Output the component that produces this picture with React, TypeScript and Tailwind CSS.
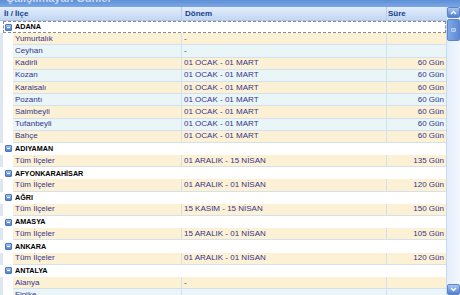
import React from "react";

type Row =
  | { kind: "group"; name: string; focus?: boolean }
  | { kind: "child"; name: string; period: string; days: string };

const rows: Row[] = [
  { kind: "group", name: "ADANA", focus: true },
  { kind: "child", name: "Yumurtalık", period: "-", days: "" },
  { kind: "child", name: "Ceyhan", period: "-", days: "" },
  { kind: "child", name: "Kadirli", period: "01 OCAK - 01 MART", days: "60 Gün" },
  { kind: "child", name: "Kozan", period: "01 OCAK - 01 MART", days: "60 Gün" },
  { kind: "child", name: "Karaisalı", period: "01 OCAK - 01 MART", days: "60 Gün" },
  { kind: "child", name: "Pozantı", period: "01 OCAK - 01 MART", days: "60 Gün" },
  { kind: "child", name: "Saimbeyli", period: "01 OCAK - 01 MART", days: "60 Gün" },
  { kind: "child", name: "Tufanbeyli", period: "01 OCAK - 01 MART", days: "60 Gün" },
  { kind: "child", name: "Bahçe", period: "01 OCAK - 01 MART", days: "60 Gün" },
  { kind: "group", name: "ADIYAMAN" },
  { kind: "child", name: "Tüm İlçeler", period: "01 ARALIK - 15 NİSAN", days: "135 Gün" },
  { kind: "group", name: "AFYONKARAHİSAR" },
  { kind: "child", name: "Tüm İlçeler", period: "01 ARALIK - 01 NİSAN", days: "120 Gün" },
  { kind: "group", name: "AĞRI" },
  { kind: "child", name: "Tüm İlçeler", period: "15 KASIM - 15 NİSAN", days: "150 Gün" },
  { kind: "group", name: "AMASYA" },
  { kind: "child", name: "Tüm İlçeler", period: "15 ARALIK - 01 NİSAN", days: "105 Gün" },
  { kind: "group", name: "ANKARA" },
  { kind: "child", name: "Tüm İlçeler", period: "01 ARALIK - 01 NİSAN", days: "120 Gün" },
  { kind: "group", name: "ANTALYA" },
  { kind: "child", name: "Alanya", period: "-", days: "" },
  { kind: "child", name: "Finike", period: "", days: "" },
];

function Minus() {
  return (
    <div className="ml-[1px] mr-[3px] flex h-[7px] w-[7px] shrink-0 items-center justify-center rounded-[1px] border border-[#4b76b8] bg-gradient-to-b from-[#a3c4f0] to-[#4f82cf]">
      <div className="h-[1px] w-[3px] bg-white" />
    </div>
  );
}

export default function App() {
  let alt = 0;
  return (
    <div
      className="flex h-[295px] w-[460px] flex-col overflow-hidden bg-white"
      style={{ fontFamily: '"Liberation Sans", Arial, sans-serif' }}
    >
      <div className="h-[7px] overflow-hidden bg-gradient-to-b from-[#5d8fd8] to-[#7ba7e2]">
        <div className="mt-[-8px] pl-[6px] text-[11px] font-bold leading-[12px] text-[#c9dcf6]">
          Çalışılmayan Günler
        </div>
      </div>
      <div className="flex min-h-0 flex-1">
        <div className="flex min-w-0 flex-1 flex-col">
          <div className="flex h-[14px] shrink-0 items-center border-b border-[#a9c4e8] bg-gradient-to-b from-[#e3edfb] to-[#c2d7f3] text-[8px] font-bold text-[#15428b]">
            <div className="w-[182px] shrink-0 border-r border-[#b6cdee] pl-[4px] leading-[13px]">İl / İlçe</div>
            <div className="w-[205px] shrink-0 border-r border-[#b6cdee] pl-[3px] leading-[13px]">Dönem</div>
            <div className="flex-1 pl-[1px] leading-[13px]">Süre</div>
          </div>
          <div className="flex flex-col">
            {rows.map((r, i) => {
              if (r.kind === "group") {
                alt = 0;
                return (
                  <div key={i} className="flex h-[12.2px] shrink-0 items-center bg-white">
                    <div
                      className={
                        r.focus
                          ? "ml-[3px] flex h-full flex-1 items-center border border-dashed border-[#8a8a8a]"
                          : "ml-[3px] flex h-full flex-1 items-center border border-transparent"
                      }
                    >
                      <Minus />
                      <span className="text-[7.2px] font-bold leading-none text-black">{r.name}</span>
                    </div>
                  </div>
                );
              }
              const bg = alt % 2 === 0 ? "bg-[#fdf1d5]" : "bg-[#eaf5f7]";
              alt++;
              return (
                <div key={i} className="flex h-[12.2px] shrink-0">
                  <div className="w-[13px] shrink-0 border-l-[3px] border-[#dde6f1] bg-white" />
                  <div
                    className={`flex flex-1 items-center border-b border-[#d3e1ee] text-[8px] leading-none text-[#34348c] ${bg}`}
                  >
                    <div className="flex w-[169px] shrink-0 items-center self-stretch border-r border-[#d3e1ee] pl-[2px]">
                      {r.name}
                    </div>
                    <div className="flex w-[205px] shrink-0 items-center self-stretch border-r border-[#d3e1ee] pl-[2px]">
                      {r.period}
                    </div>
                    <div className="flex flex-1 items-center justify-end self-stretch pr-[2px]">{r.days}</div>
                  </div>
                </div>
              );
            })}
          </div>
        </div>
        <div className="flex w-[14px] shrink-0 flex-col border-l border-[#c9d9f0] bg-gradient-to-r from-[#e3edfb] to-[#f3f7fd]">
          <div className="flex h-[11px] items-center justify-center rounded-[2px] border border-[#5e86c6] bg-gradient-to-b from-[#a8c6f1] to-[#4f7fcd]">
            <svg width="7" height="5" viewBox="0 0 7 5">
              <path d="M1 4 L3.5 1.5 L6 4" stroke="white" strokeWidth="1.4" fill="none" />
            </svg>
          </div>
          <div className="mt-[1px] flex h-[22px] items-center justify-center rounded-[2px] border border-[#5e86c6] bg-gradient-to-r from-[#7fa8e6] to-[#5d8ad3]">
            <div className="h-[4px] w-[5px] rounded-[1px] border border-[#b9d0f3] bg-[#8fb3ea]" />
          </div>
          <div className="flex-1" />
          <div className="flex h-[11px] items-center justify-center rounded-[2px] border border-[#5e86c6] bg-gradient-to-b from-[#a8c6f1] to-[#4f7fcd]">
            <svg width="7" height="5" viewBox="0 0 7 5">
              <path d="M1 1 L3.5 3.5 L6 1" stroke="white" strokeWidth="1.4" fill="none" />
            </svg>
          </div>
        </div>
      </div>
    </div>
  );
}
